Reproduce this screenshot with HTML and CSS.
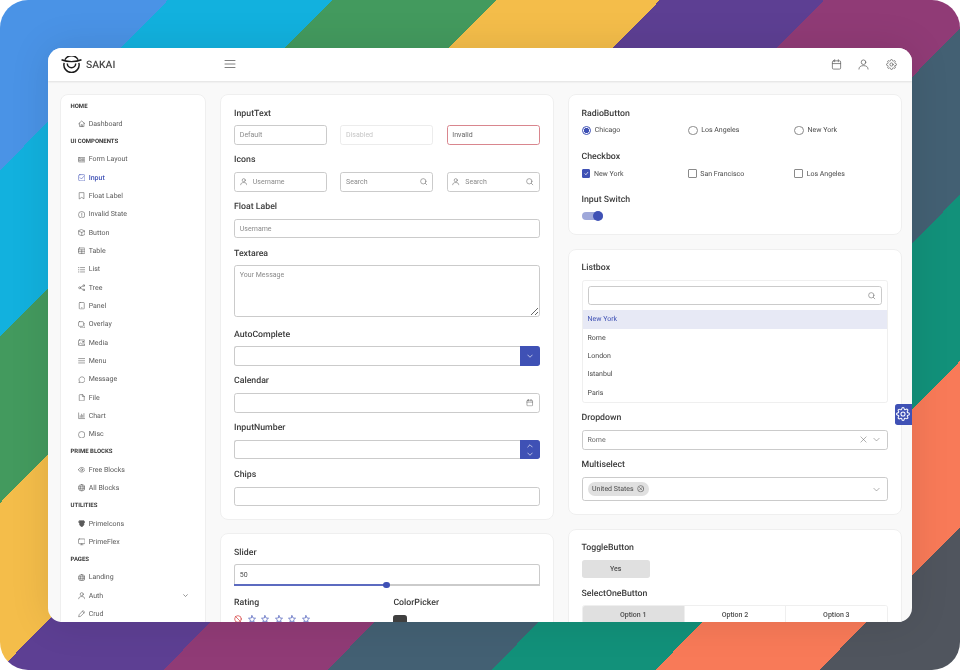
FILE: index.html
```html
<!DOCTYPE html>
<html lang="en">
<head>
    <meta charset="UTF-8">
    <meta name="viewport" content="width=device-width, initial-scale=1.0">
    <title>Sakai</title>
    <link rel="stylesheet" href="styles.css">
</head>
<body>
    <!-- icon sprite -->
    <svg class="sprite" xmlns="http://www.w3.org/2000/svg">
        <symbol id="i-home" viewBox="0 0 24 24"><path d="M2 12 12 3l10 9M5 10v11h14V10M10 21v-6h4v6"/></symbol>
        <symbol id="i-id" viewBox="0 0 24 24"><rect x="1" y="5" width="22" height="14" rx="2"/><path d="M4 9h6v6H4zM13 9h7M13 12h7M13 15h7"/></symbol>
        <symbol id="i-check-square" viewBox="0 0 24 24"><rect x="2" y="2" width="20" height="20" rx="4"/><path d="m7 12 4 4 7-8"/></symbol>
        <symbol id="i-bookmark" viewBox="0 0 24 24"><path d="M5 2h14v20l-7-5-7 5z"/></symbol>
        <symbol id="i-info" viewBox="0 0 24 24"><circle cx="12" cy="12" r="10.5"/><path d="M12 7v6M12 16v1.5"/></symbol>
        <symbol id="i-box" viewBox="0 0 24 24"><path d="m12 2 10 4.5v11L12 22 2 17.500v-11zM2 6.500l10 4.500 10-4.500M12 11v11"/></symbol>
        <symbol id="i-table" viewBox="0 0 24 24"><rect x="1.500" y="3" width="21" height="18" rx="3"/><path d="M1.500 9h21M1.500 15h21M12 9v12"/></symbol>
        <symbol id="i-list" viewBox="0 0 24 24"><path d="M8 5h15M8 12h15M8 19h15M1 5h2M1 12h2M1 19h2"/></symbol>
        <symbol id="i-share" viewBox="0 0 24 24"><circle cx="19" cy="5" r="3"/><circle cx="5" cy="12" r="3"/><circle cx="19" cy="19" r="3"/><path d="m8 10.500 8-4M8 13.500l8 4"/></symbol>
        <symbol id="i-tablet" viewBox="0 0 24 24"><rect x="4" y="1.500" width="16" height="21" rx="2.500"/><path d="M11 18.500h2"/></symbol>
        <symbol id="i-clone" viewBox="0 0 24 24"><rect x="1.500" y="2" width="16" height="15" rx="3"/><path d="M21 8a2 2 0 0 1 1.500 2v9a3 3 0 0 1-3 3H10a2 2 0 0 1-2-1.500"/></symbol>
        <symbol id="i-image" viewBox="0 0 24 24"><rect x="1.500" y="3" width="21" height="18" rx="3"/><path d="m2 18 6-5 5 4 3-2 6 4"/><circle cx="16" cy="9" r="2"/></symbol>
        <symbol id="i-bars" viewBox="0 0 24 24"><path d="M2 5h20M2 12h20M2 19h20"/></symbol>
        <symbol id="i-comment" viewBox="0 0 24 24"><path d="M3 22l1.500-5A9.500 9.500 0 1 1 8 20.500z"/></symbol>
        <symbol id="i-file" viewBox="0 0 24 24"><path d="M14 2H6a2 2 0 0 0-2 2v16a2 2 0 0 0 2 2h12a2 2 0 0 0 2-2V8zM14 2v6h6"/></symbol>
        <symbol id="i-chart" viewBox="0 0 24 24"><path d="M2 3v18h20M7 17v-5M11 17V7M15 17v-7M19 17V5"/></symbol>
        <symbol id="i-circle" viewBox="0 0 24 24"><circle cx="12" cy="12" r="10.500"/></symbol>
        <symbol id="i-eye" viewBox="0 0 24 24"><path d="M1 12s4-7.500 11-7.500S23 12 23 12s-4 7.500-11 7.500S1 12 1 12z"/><circle cx="12" cy="12" r="3.500"/></symbol>
        <symbol id="i-globe" viewBox="0 0 24 24"><circle cx="12" cy="12" r="10.500"/><path d="M2 9h20M2 15h20M12 1.500c-6 6-6 15 0 21M12 1.500c6 6 6 15 0 21"/></symbol>
        <symbol id="i-prime" viewBox="0 0 24 24"><path class="solid" d="M5 2h14l3 5-3 3v5l-3 4-4 3-4-3-3-4v-5L2 7z"/></symbol>
        <symbol id="i-desktop" viewBox="0 0 24 24"><rect x="1.500" y="3" width="21" height="15" rx="2.500"/><path d="M8 22h8M12 18v4"/></symbol>
        <symbol id="i-user" viewBox="0 0 24 24"><circle cx="12" cy="7" r="5"/><path d="M2 22c0-5 4-7.500 10-7.500S22 17 22 22"/></symbol>
        <symbol id="i-pencil" viewBox="0 0 24 24"><path d="M17 2.500 21.500 7 8 20.500 2 22l1.500-6zM14.500 5 19 9.500"/></symbol>
        <symbol id="i-down" viewBox="0 0 24 24"><path d="m3 8 9 9 9-9"/></symbol>
        <symbol id="i-up" viewBox="0 0 24 24"><path d="m3 16 9-9 9 9"/></symbol>
        <symbol id="i-calendar" viewBox="0 0 24 24"><rect x="3" y="4" width="18" height="18" rx="2.500"/><path d="M3 10h18M8 1.500V6M16 1.500V6"/></symbol>
        <symbol id="i-cog" viewBox="0 0 24 24"><circle cx="12" cy="12" r="3.500"/><path d="M19.400 15a1.650 1.650 0 0 0 .33 1.820l.06.06a2 2 0 0 1 0 2.830 2 2 0 0 1-2.830 0l-.06-.06a1.650 1.650 0 0 0-1.820-.33 1.650 1.650 0 0 0-1 1.510V21a2 2 0 0 1-2 2 2 2 0 0 1-2-2v-.09A1.650 1.650 0 0 0 9 19.400a1.650 1.650 0 0 0-1.820.33l-.06.06a2 2 0 0 1-2.830 0 2 2 0 0 1 0-2.830l.06-.06a1.650 1.650 0 0 0 .33-1.820 1.650 1.650 0 0 0-1.510-1H3a2 2 0 0 1-2-2 2 2 0 0 1 2-2h.09A1.650 1.650 0 0 0 4.600 9a1.650 1.650 0 0 0-.33-1.820l-.06-.06a2 2 0 0 1 0-2.830 2 2 0 0 1 2.830 0l.06.06a1.650 1.650 0 0 0 1.820.33H9a1.650 1.650 0 0 0 1-1.510V3a2 2 0 0 1 2-2 2 2 0 0 1 2 2v.09a1.650 1.650 0 0 0 1 1.510 1.650 1.650 0 0 0 1.820-.33l.06-.06a2 2 0 0 1 2.830 0 2 2 0 0 1 0 2.830l-.06.06a1.650 1.650 0 0 0-.33 1.820V9a1.650 1.650 0 0 0 1.510 1H21a2 2 0 0 1 2 2 2 2 0 0 1-2 2h-.09a1.650 1.650 0 0 0-1.510 1z"/></symbol>
        <symbol id="i-search" viewBox="0 0 24 24"><circle cx="10.500" cy="10.500" r="8.500"/><path d="m17 17 5.500 5.500"/></symbol>
        <symbol id="i-times" viewBox="0 0 24 24"><path d="m3 3 18 18M21 3 3 21"/></symbol>
        <symbol id="i-star" viewBox="0 0 24 24"><path d="m12 2 3 7 7.500.7-5.700 5 1.700 7.300-6.500-3.900L5.500 22l1.700-7.300-5.700-5L9 9z"/></symbol>
        <symbol id="i-ban" viewBox="0 0 24 24"><circle cx="12" cy="12" r="10"/><path d="m5 5 14 14"/></symbol>
        <symbol id="i-times-circle" viewBox="0 0 24 24"><circle cx="12" cy="12" r="10"/><path d="m8 8 8 8M16 8l-8 8"/></symbol>
    </svg>

    <div class="stage">
        <div class="window">
            <header class="topbar">
                <div class="logo">
                    <svg class="logo-mark" viewBox="0 0 40 32">
                        <path d="M1 7c6 2.500 12 3.500 19 3.500S33 9.500 39 7"/>
                        <path d="M7.500 7a14 14 0 0 1 25 0"/>
                        <path d="M6 13a14.500 14.500 0 1 0 28 0"/>
                        <path d="M12 14a8 8 0 1 0 16 0"/>
                    </svg>
                    <span>SAKAI</span>
                </div>
                <svg class="icon menu-toggle"><use href="#i-bars"/></svg>
                <div class="topbar-actions">
                    <svg class="icon"><use href="#i-calendar"/></svg>
                    <svg class="icon"><use href="#i-user"/></svg>
                    <svg class="icon"><use href="#i-cog"/></svg>
                </div>
            </header>

            <div class="layout">
                <nav class="card sidebar">
                    <div class="nav-title">HOME</div>
                    <a class="nav-item"><svg class="icon"><use href="#i-home"/></svg>Dashboard</a>
                    <div class="nav-title">UI COMPONENTS</div>
                    <a class="nav-item"><svg class="icon"><use href="#i-id"/></svg>Form Layout</a>
                    <a class="nav-item active"><svg class="icon"><use href="#i-check-square"/></svg>Input</a>
                    <a class="nav-item"><svg class="icon"><use href="#i-bookmark"/></svg>Float Label</a>
                    <a class="nav-item"><svg class="icon"><use href="#i-info"/></svg>Invalid State</a>
                    <a class="nav-item"><svg class="icon"><use href="#i-box"/></svg>Button</a>
                    <a class="nav-item"><svg class="icon"><use href="#i-table"/></svg>Table</a>
                    <a class="nav-item"><svg class="icon"><use href="#i-list"/></svg>List</a>
                    <a class="nav-item"><svg class="icon"><use href="#i-share"/></svg>Tree</a>
                    <a class="nav-item"><svg class="icon"><use href="#i-tablet"/></svg>Panel</a>
                    <a class="nav-item"><svg class="icon"><use href="#i-clone"/></svg>Overlay</a>
                    <a class="nav-item"><svg class="icon"><use href="#i-image"/></svg>Media</a>
                    <a class="nav-item"><svg class="icon"><use href="#i-bars"/></svg>Menu</a>
                    <a class="nav-item"><svg class="icon"><use href="#i-comment"/></svg>Message</a>
                    <a class="nav-item"><svg class="icon"><use href="#i-file"/></svg>File</a>
                    <a class="nav-item"><svg class="icon"><use href="#i-chart"/></svg>Chart</a>
                    <a class="nav-item"><svg class="icon"><use href="#i-circle"/></svg>Misc</a>
                    <div class="nav-title">PRIME BLOCKS</div>
                    <a class="nav-item"><svg class="icon"><use href="#i-eye"/></svg>Free Blocks</a>
                    <a class="nav-item"><svg class="icon"><use href="#i-globe"/></svg>All Blocks</a>
                    <div class="nav-title">UTILITIES</div>
                    <a class="nav-item"><svg class="icon"><use href="#i-prime"/></svg>PrimeIcons</a>
                    <a class="nav-item"><svg class="icon"><use href="#i-desktop"/></svg>PrimeFlex</a>
                    <div class="nav-title">PAGES</div>
                    <a class="nav-item"><svg class="icon"><use href="#i-globe"/></svg>Landing</a>
                    <a class="nav-item"><svg class="icon"><use href="#i-user"/></svg>Auth<svg class="icon nav-caret"><use href="#i-down"/></svg></a>
                    <a class="nav-item"><svg class="icon"><use href="#i-pencil"/></svg>Crud</a>
                </nav>

                <div class="column column-left">
                    <section class="card">
                        <h5>InputText</h5>
                        <div class="row-3">
                            <input class="field" placeholder="Default">
                            <input class="field" placeholder="Disabled" disabled>
                            <input class="field invalid" placeholder="Invalid">
                        </div>
                        <h5>Icons</h5>
                        <div class="row-3">
                            <div class="field-icons">
                                <svg class="icon"><use href="#i-user"/></svg>
                                <input placeholder="Username">
                            </div>
                            <div class="field-icons">
                                <input placeholder="Search">
                                <svg class="icon"><use href="#i-search"/></svg>
                            </div>
                            <div class="field-icons">
                                <svg class="icon"><use href="#i-user"/></svg>
                                <input placeholder="Search">
                                <svg class="icon"><use href="#i-search"/></svg>
                            </div>
                        </div>
                        <h5>Float Label</h5>
                        <input class="field" placeholder="Username">
                        <h5>Textarea</h5>
                        <textarea class="field area" placeholder="Your Message"></textarea>
                        <h5>AutoComplete</h5>
                        <div class="group">
                            <input class="field">
                            <span class="addon"><svg class="icon"><use href="#i-down"/></svg></span>
                        </div>
                        <h5>Calendar</h5>
                        <div class="field-icons">
                            <input>
                            <svg class="icon"><use href="#i-calendar"/></svg>
                        </div>
                        <h5>InputNumber</h5>
                        <div class="group">
                            <input class="field">
                            <span class="addon stacked">
                                <svg class="icon"><use href="#i-up"/></svg>
                                <svg class="icon"><use href="#i-down"/></svg>
                            </span>
                        </div>
                        <h5>Chips</h5>
                        <input class="field">
                    </section>

                    <section class="card">
                        <h5>Slider</h5>
                        <input class="field slider-input" value="50">
                        <div class="slider"><span class="slider-range"></span><span class="slider-thumb"></span></div>
                        <div class="row-2">
                            <div>
                                <h5>Rating</h5>
                                <div class="rating">
                                    <svg class="icon ban"><use href="#i-ban"/></svg>
                                    <svg class="icon"><use href="#i-star"/></svg>
                                    <svg class="icon"><use href="#i-star"/></svg>
                                    <svg class="icon"><use href="#i-star"/></svg>
                                    <svg class="icon"><use href="#i-star"/></svg>
                                    <svg class="icon"><use href="#i-star"/></svg>
                                </div>
                            </div>
                            <div>
                                <h5>ColorPicker</h5>
                                <div class="swatch"></div>
                            </div>
                        </div>
                    </section>
                </div>

                <div class="column">
                    <section class="card">
                        <h5>RadioButton</h5>
                        <div class="choice-row radios">
                            <label class="choice"><span class="radio checked"></span>Chicago</label>
                            <label class="choice"><span class="radio"></span>Los Angeles</label>
                            <label class="choice"><span class="radio"></span>New York</label>
                        </div>
                        <h5>Checkbox</h5>
                        <div class="choice-row checks">
                            <label class="choice">
                                <span class="check checked"><svg viewBox="0 0 24 24"><path d="m6 12 4 5 8-10"/></svg></span>New York
                            </label>
                            <label class="choice"><span class="check"></span>San Francisco</label>
                            <label class="choice"><span class="check"></span>Los Angeles</label>
                        </div>
                        <h5>Input Switch</h5>
                        <div class="switch"><span></span></div>
                    </section>

                    <section class="card">
                        <h5>Listbox</h5>
                        <div class="listbox">
                            <div class="listbox-filter">
                                <div class="field-icons">
                                    <input>
                                    <svg class="icon"><use href="#i-search"/></svg>
                                </div>
                            </div>
                            <ul>
                                <li class="selected">New York</li>
                                <li>Rome</li>
                                <li>London</li>
                                <li>Istanbul</li>
                                <li>Paris</li>
                            </ul>
                        </div>
                        <h5>Dropdown</h5>
                        <div class="field-icons select">
                            <span class="select-value">Rome</span>
                            <svg class="icon"><use href="#i-times"/></svg>
                            <svg class="icon"><use href="#i-down"/></svg>
                        </div>
                        <h5>Multiselect</h5>
                        <div class="field-icons select multi">
                            <span class="select-value"><span class="chip">United States<svg class="icon"><use href="#i-times-circle"/></svg></span></span>
                            <svg class="icon"><use href="#i-down"/></svg>
                        </div>
                    </section>

                    <section class="card">
                        <h5>ToggleButton</h5>
                        <button class="toggle">Yes</button>
                        <h5>SelectOneButton</h5>
                        <div class="select-button">
                            <button class="on">Option 1</button>
                            <button>Option 2</button>
                            <button>Option 3</button>
                        </div>
                    </section>
                </div>
            </div>

            <button class="config"><svg class="icon"><use href="#i-cog"/></svg></button>
        </div>
    </div>
</body>
</html>
```
FILE: styles.css
```css
* {
    box-sizing: border-box;
}

html, body {
    margin: 0;
    height: 100%;
    background: #fff;
}

body {
    font-family: Roboto, "Liberation Sans", sans-serif;
    font-size: 7px;
    color: #4b4b4b;
    overflow: hidden;
    text-rendering: geometricPrecision;
}

.sprite {
    display: none;
}

.icon {
    width: 7.500px;
    height: 7.500px;
    flex: none;
    fill: none;
    stroke: currentColor;
    stroke-width: 1.8;
    stroke-linecap: round;
    stroke-linejoin: round;
}

.stage {
    height: 670px;
    padding: 48px;
    border-radius: 28px;
    background: linear-gradient(134.6deg,
        #4a93e6 119.6px, #12b1de 119.6px, #12b1de 236.4px,
        #439a5e 236.4px, #439a5e 353.2px, #f4bd4a 353.2px, #f4bd4a 469.9px,
        #5d3f93 469.9px, #5d3f93 586.7px, #903b76 586.7px, #903b76 703.5px,
        #436073 703.5px, #436073 820.3px, #12917a 820.3px, #12917a 937px,
        #f87a58 937px, #f87a58 1053.8px, #50555e 1053.8px);
}

/* screenshot was scaled down, text is soft */
.window {
    position: relative;
    height: 574px;
    border-radius: 14px;
    background: #f9f9f9;
    overflow: hidden;
    box-shadow: 0 0 40px rgba(0, 0, 0, .1);
    filter: blur(.25px);
    will-change: transform;
}

/* topbar */
.topbar {
    display: flex;
    align-items: center;
    height: 33px;
    padding: 0 15.500px 1px 12.500px;
    background: #fff;
    box-shadow: 0 1px 2px rgba(0, 0, 0, .1);
    position: relative;
}

.logo {
    display: flex;
    align-items: center;
    gap: 4.500px;
    width: 163.500px;
    font-size: 10.300px;
    font-weight: 500;
    color: #4b4b4b;
}

.logo-mark {
    width: 21px;
    height: 17px;
    fill: none;
    stroke: #1c1c1c;
    stroke-width: 2.800;
}

.menu-toggle {
    width: 12px;
    height: 12px;
    stroke-width: 1.500;
    color: #555;
}

.topbar-actions {
    margin-left: auto;
    display: flex;
    gap: 16.500px;
    color: #666;
}

.topbar-actions .icon {
    width: 11px;
    height: 11px;
    stroke-width: 1.700;
}

/* page grid */
.layout {
    display: grid;
    grid-template-columns: 146.500px 333.500px 334px;
    gap: 14px;
    align-items: start;
    padding: 13px 0 0 11.500px;
}

.column {
    display: flex;
    flex-direction: column;
    gap: 14px;
}

.column-left {
    gap: 13.500px;
}

.card {
    background: #fff;
    border: 1px solid #efefef;
    border-radius: 8px;
    padding: 12.500px 13px;
}

h5 {
    margin: 9.300px 0 5.900px;
    font-size: 8.750px;
    line-height: 12px;
    font-weight: 500;
    color: #3a3a3a;
}

h5:first-child {
    margin-top: 0;
}

/* sidebar */
.sidebar {
    padding: 2.500px 10px 40px;
}

.nav-title {
    height: 17.200px;
    line-height: 17.200px;
    font-size: 6px;
    font-weight: 700;
    color: #3a3a3a;
}

.nav-item {
    display: flex;
    align-items: center;
    height: 18.330px;
    padding-left: 7px;
    gap: 3.700px;
    color: #5a5a5a;
}

.nav-item.active {
    color: #3f51b5;
    font-weight: 500;
}

.nav-caret {
    margin-left: auto;
    margin-right: 6.800px;
    width: 5px;
    height: 5px;
    stroke-width: 3;
}

.solid {
    fill: currentColor;
}

/* inputs */
input, textarea, button {
    font: inherit;
    color: inherit;
}

input::placeholder, textarea::placeholder {
    color: #8a8a8a;
    opacity: 1;
}

.field {
    display: block;
    width: 100%;
    height: 19.500px;
    padding: 0 4.800px;
    border: 1px solid #cbcbcb;
    border-radius: 2.700px;
    background: #fff;
    outline: none;
}

.field:disabled {
    border-color: #ececec;
}

.field:disabled::placeholder {
    color: #c6c6c6;
}

.field.invalid {
    border-color: #d9868e;
}

.field.invalid::placeholder {
    color: #666;
}

.area {
    height: 51.500px;
    margin-bottom: 11.600px;
    padding-top: 5px;
    resize: vertical;
}

.row-3 {
    display: grid;
    grid-template-columns: repeat(3, minmax(0, 1fr));
    gap: 13.300px;
}

.row-2 {
    display: grid;
    grid-template-columns: repeat(2, minmax(0, 1fr));
    gap: 13.300px;
}

.field-icons {
    display: flex;
    align-items: center;
    gap: 5.500px;
    height: 19.500px;
    padding: 0 4.800px;
    border: 1px solid #cbcbcb;
    border-radius: 2.700px;
    background: #fff;
    color: #6a6a6a;
}

.field-icons input {
    flex: 1;
    min-width: 0;
    border: 0;
    padding: 0;
    outline: none;
    background: none;
}

.group {
    display: flex;
}

.group .field {
    flex: 1;
    border-right: 0;
    border-radius: 2.700px 0 0 2.700px;
}

.addon {
    display: flex;
    align-items: center;
    justify-content: center;
    width: 19.300px;
    border-radius: 0 2.700px 2.700px 0;
    background: #3f51b5;
    color: #fff;
}

.addon .icon {
    width: 6px;
    height: 6px;
    stroke-width: 2.500;
}

.addon.stacked {
    flex-direction: column;
    gap: 2px;
}

/* slider + rating */
.slider-input {
    border-bottom: 0;
    border-radius: 2.700px 2.700px 0 0;
}

.slider {
    position: relative;
    height: 2px;
    margin-bottom: 11px;
    background: #cbcbcb;
}

.slider-range {
    display: block;
    width: 50%;
    height: 100%;
    background: #5c6bc0;
}

.slider-thumb {
    position: absolute;
    left: 50%;
    top: -2.300px;
    width: 6.600px;
    height: 6.600px;
    margin-left: -3.300px;
    border-radius: 50%;
    background: #3f51b5;
}

.rating {
    display: flex;
    gap: 5.500px;
    color: #3f51b5;
}

.rating .icon {
    width: 8px;
    height: 8px;
    stroke-width: 2;
}

.ban {
    color: #d32f2f;
}

.swatch {
    width: 13.500px;
    height: 13.500px;
    border-radius: 2.700px;
    background: #3f3f3f;
}

/* radios and checkboxes */
.choice-row {
    display: grid;
    grid-template-columns: repeat(3, 106.400px);
}

.radios {
    margin-bottom: 16px;
}

.checks {
    margin-bottom: 16.400px;
}

.choice {
    display: flex;
    align-items: center;
    gap: 3.600px;
    height: 10px;
}

.checks .choice {
    height: 8.800px;
}

.radio {
    width: 9.700px;
    height: 9.700px;
    border: 1px solid #8a8a8a;
    border-radius: 50%;
}

.radio.checked {
    border-color: #3f51b5;
    background: radial-gradient(circle, #3f51b5 2.500px, #fff 2.900px);
}

.check {
    width: 8.800px;
    height: 8.800px;
    border: 1px solid #8a8a8a;
    border-radius: 1px;
}

.check.checked {
    border-color: #3f51b5;
    background: #3f51b5;
}

.check svg {
    display: block;
    fill: none;
    stroke: #fff;
    stroke-width: 2.500;
}

.switch {
    position: relative;
    width: 21px;
    height: 7.500px;
    margin-bottom: 1.600px;
    border-radius: 4px;
    background: #9fa8da;
}

.switch span {
    position: absolute;
    right: 0;
    top: -1.300px;
    width: 10px;
    height: 10px;
    border-radius: 50%;
    background: #3f51b5;
}

/* listbox */
.listbox {
    border: 1px solid #efefef;
    border-radius: 2.700px;
}

.listbox-filter {
    padding: 5px;
}

.listbox-filter .field-icons {
    height: 19px;
}

.listbox ul {
    list-style: none;
    margin: 0;
    padding: 0;
}

.listbox li {
    height: 18.330px;
    line-height: 18.330px;
    padding: 0 5px;
}

.listbox li.selected {
    background: #e7e9f5;
    color: #3f51b5;
}

.select-value {
    flex: 1;
}

.select {
    gap: 6px;
    padding: 0 6.500px 0 5px;
}

.select .icon {
    width: 7px;
    height: 7px;
}

.select.multi {
    height: 24.500px;
}

.chip {
    display: inline-flex;
    align-items: center;
    gap: 3px;
    height: 13.300px;
    padding: 0 4.500px;
    border-radius: 7px;
    background: #e0e0e0;
    color: #4b4b4b;
}

.chip .icon {
    width: 7.500px;
    height: 7.500px;
}

/* buttons */
.toggle {
    display: block;
    width: 68.300px;
    height: 18px;
    border: 0;
    border-radius: 2.700px;
    background: #e0e0e0;
    font-weight: 500;
}

.select-button {
    display: grid;
    grid-template-columns: repeat(3, 1fr);
    border: 1px solid #efefef;
    border-radius: 2.700px;
    overflow: hidden;
}

.select-button button {
    height: 18px;
    border: 0;
    border-left: 1px solid #efefef;
    background: #fff;
    font-weight: 500;
}

.select-button button:first-child {
    border-left: 0;
}

.select-button .on {
    background: #e0e0e0;
}

.config {
    position: absolute;
    right: 0;
    top: 356px;
    display: flex;
    align-items: center;
    justify-content: center;
    width: 17.500px;
    height: 20.500px;
    padding: 0;
    border: 0;
    border-radius: 2.700px 0 0 2.700px;
    background: #3f51b5;
    color: #fff;
}

.config .icon {
    width: 14px;
    height: 14px;
}
```
